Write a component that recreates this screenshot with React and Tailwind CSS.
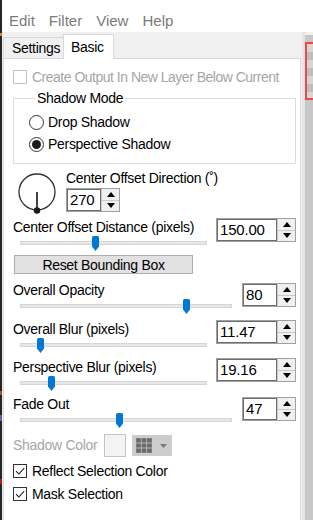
import React from "react";

function Thumb() {
  return (
    <svg width="7" height="15" viewBox="0 0 7 15" className="block">
      <path d="M0 1.5Q0 0 1.5 0H5.5Q7 0 7 1.5V10.5L3.5 15L0 10.5Z" fill="#0078d7" />
    </svg>
  );
}

function SpinArrows() {
  return (
    <div className="flex w-[18px] flex-col border-l border-[#c9c9c9] bg-[#f0f0f0]">
      <div className="flex flex-1 items-center justify-center border-b border-[#c9c9c9]">
        <svg width="8" height="5" viewBox="0 0 8 5"><path d="M0 5L4 0L8 5Z" fill="#000" /></svg>
      </div>
      <div className="flex flex-1 items-center justify-center">
        <svg width="8" height="5" viewBox="0 0 8 5"><path d="M0 0H8L4 5Z" fill="#000" /></svg>
      </div>
    </div>
  );
}

function SpinBox({ value, inputClass }) {
  return (
    <div className="flex h-[24px] border border-[#a0a0a0] bg-white">
      <div className={"flex items-center border border-[#6d6d6d] pl-[2px] text-[15px] tracking-[-0.2px] text-black " + inputClass}>
        {value}
      </div>
      <SpinArrows />
    </div>
  );
}

function SliderRow({ label, value, narrow, thumbX, className }) {
  return (
    <div className={"flex justify-between " + className}>
      <div className="flex flex-col">
        <div className="h-[19px] leading-[20px]">{label}</div>
        <div className={"relative ml-[7px] h-[16px] " + (narrow ? "w-[212px]" : "w-[187px]")}>
          <div className="absolute left-0 right-0 top-[5px] h-[4px] border border-[#d6d6d6] bg-[#e7e7e7]" />
          <div className="absolute top-0" style={{ left: thumbX }}>
            <Thumb />
          </div>
        </div>
      </div>
      <div className={narrow ? "mt-[3px]" : "mt-[1px]"}>
        <SpinBox value={value} inputClass={narrow ? "w-[34px]" : "w-[60px]"} />
      </div>
    </div>
  );
}

function CheckBox({ checked, disabled }) {
  return (
    <div className={"flex h-[14px] w-[14px] items-center justify-center border bg-white " + (disabled ? "border-[#c4c4c4]" : "border-[#333]")}>
      {checked && (
        <svg width="12" height="12" viewBox="0 0 12 12">
          <path d="M2 6.2L4.8 9L10.2 3.2" fill="none" stroke="#222" strokeWidth="1.1" />
        </svg>
      )}
    </div>
  );
}

function Radio({ on }) {
  return (
    <div className="flex h-[15px] w-[15px] items-center justify-center rounded-full border border-[#333] bg-white">
      {on && <div className="h-[9px] w-[9px] rounded-full bg-[#1a1a1a]" />}
    </div>
  );
}

export default function App() {
  return (
    <div className="flex h-[520px] w-[313px] overflow-hidden bg-white font-['Liberation_Sans',Arial,sans-serif] text-[14px] tracking-[-0.3px] text-black">
      {/* window behind, peeking at the left edge */}
      <div className="flex w-[2px] flex-col bg-[#262626]">
        <div className="mt-[33px] h-[3px] bg-[#e07828]" />
        <div className="mt-[355px] h-[4px] bg-[#b34a2a]" />
        <div className="mt-[20px] h-[6px] bg-[#6a5ab0]" />
        <div className="mt-[58px] h-[5px] bg-[#b02020]" />
      </div>

      <div className="flex flex-1 flex-col">
        {/* menu */}
        <div className="flex h-[32px] gap-[14px] bg-white pl-[7px] pt-[12px] text-[15px] leading-[18px] tracking-normal text-[#7a7a7a]">
          <span>Edit</span>
          <span>Filter</span>
          <span>View</span>
          <span>Help</span>
        </div>

        <div className="flex flex-1">
          <div className="flex w-[300px] flex-col bg-[#f0f0f0]">
            {/* tabs */}
            <div className="flex h-[26px] items-end pl-[1px]">
              <div className="flex h-[21px] w-[60px] items-center border-l border-t border-[#d9d9d9] bg-[#f0f0f0] pl-[8px]">
                Settings
              </div>
              <div className="relative z-10 -mb-px flex h-[25px] w-[51px] items-start border-l border-r border-t border-[#d9d9d9] bg-white pl-[7px] pt-[2px]">
                Basic
              </div>
            </div>

            {/* panel */}
            <div className="ml-[1px] flex w-[298px] flex-1 flex-col border-l border-r border-t border-[#d9d9d9] bg-white pl-[9px] pr-[4px]">
              <div className="mt-[8px] flex h-[20px] items-center gap-[5px] tracking-[-0.5px] text-[#a6a6a6]">
                <CheckBox disabled />
                <span>Create Output In New Layer Below Current</span>
              </div>

              <fieldset className="mt-[1px] h-[76px] border border-[#dcdcdc] pl-[15px] pt-[3px]">
                <legend className="ml-[6px] px-[2px] leading-[20px]">Shadow Mode</legend>
                <div className="flex h-[22px] items-center gap-[4px]">
                  <Radio />
                  <span>Drop Shadow</span>
                </div>
                <div className="flex h-[22px] items-center gap-[4px]">
                  <Radio on />
                  <span>Perspective Shadow</span>
                </div>
              </fieldset>

              <div className="mt-[4px] flex items-start">
                <svg width="38" height="42" viewBox="0 0 38 42" className="ml-[5px] mt-[5px]">
                  <circle cx="19" cy="19" r="18" fill="none" stroke="#333" strokeWidth="1.3" />
                  <line x1="19" y1="19" x2="19" y2="37" stroke="#444" strokeWidth="2" />
                  <circle cx="19" cy="37.5" r="3.2" fill="#1a1a1a" />
                </svg>
                <div className="ml-[10px] flex flex-col">
                  <div className="h-[20px] leading-[20px]">Center Offset Direction (˚)</div>
                  <div className="flex">
                    <SpinBox value="270" inputClass="w-[34px]" />
                  </div>
                </div>
              </div>

              <SliderRow className="mt-[2px]" label="Center Offset Distance (pixels)" value="150.00" thumbX={72} />

              <button className="ml-[1px] mt-[3px] h-[19px] w-[179px] border border-[#adadad] bg-[#e1e1e1] text-[14px] leading-[16px] tracking-[-0.3px] text-black">
                Reset Bounding Box
              </button>

              <SliderRow className="mt-[6px]" label="Overall Opacity" value="80" narrow thumbX={163} />
              <SliderRow className="mt-[4px]" label="Overall Blur (pixels)" value="11.47" thumbX={17} />
              <SliderRow className="mt-[3px]" label="Perspective Blur (pixels)" value="19.16" thumbX={28} />
              <SliderRow className="mt-[2px]" label="Fade Out" value="47" narrow thumbX={96} />

              <div className="mt-[5px] flex h-[23px] items-center">
                <span className="w-[91px] text-[#a6a6a6]">Shadow Color</span>
                <div className="h-[23px] w-[22px] border border-[#c4c4c4] bg-[#f3f3f3]" />
                <div className="ml-[6px] flex h-[21px] w-[40px] items-center bg-[#cccccc] pl-[4px]">
                  <svg width="16" height="15" viewBox="0 0 16 15">
                    <rect x="0" y="0" width="16" height="15" fill="#8a8a8a" />
                    <rect x="0.5" y="0.5" width="4.5" height="4" fill="#6b6b6b" />
                    <rect x="5.8" y="0.5" width="4.5" height="4" fill="#6b6b6b" />
                    <rect x="11" y="0.5" width="4.5" height="4" fill="#6b6b6b" />
                    <rect x="0.5" y="5.5" width="4.5" height="4" fill="#6b6b6b" />
                    <rect x="5.8" y="5.5" width="4.5" height="4" fill="#6b6b6b" />
                    <rect x="11" y="5.5" width="4.5" height="4" fill="#6b6b6b" />
                    <rect x="0.5" y="10.5" width="4.5" height="4" fill="#6b6b6b" />
                    <rect x="5.8" y="10.5" width="4.5" height="4" fill="#6b6b6b" />
                    <rect x="11" y="10.5" width="4.5" height="4" fill="#6b6b6b" />
                    <path d="M0 5H16M0 10H16M5.3 0V15M10.6 0V15" stroke="#b8b8b8" strokeWidth="0.8" />
                  </svg>
                  <svg width="7" height="4" viewBox="0 0 7 4" className="ml-[8px]">
                    <path d="M0 0H7L3.5 4Z" fill="#7a7a7a" />
                  </svg>
                </div>
              </div>

              <div className="mt-[4px] flex h-[20px] items-center gap-[5px]">
                <CheckBox checked />
                <span>Reflect Selection Color</span>
              </div>
              <div className="mt-[3px] flex h-[20px] items-center gap-[5px]">
                <CheckBox checked />
                <span>Mask Selection</span>
              </div>
            </div>
          </div>

          {/* right edge: neighbouring panel */}
          <div className="flex w-[11px]">
            <div className="w-[3px] bg-[#e4e4e4]" />
            <div className="flex w-[8px] flex-col bg-[#c8c8c8]">
              <div className="h-[3px] bg-[#f0f0f0]" />
              <div className="mt-[7px] h-[58px] border-b-2 border-l-2 border-t-2 border-[#f04848] bg-[repeating-linear-gradient(180deg,#d6d6d6_0px,#d6d6d6_8px,#bdbdbd_8px,#bdbdbd_16px)]" />
            </div>
          </div>
        </div>
      </div>
    </div>
  );
}
